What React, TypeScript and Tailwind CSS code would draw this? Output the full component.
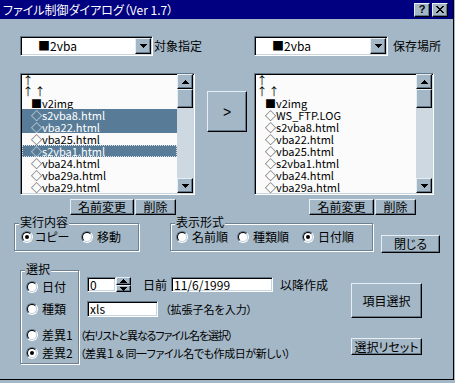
import React from "react";

const FACE = "bg-[#a4b7c6]";
const RAISED =
  "border border-t-[#e6eef3] border-l-[#e6eef3] border-r-black border-b-black shadow-[inset_-1px_-1px_0_#647889]";
const SUNKEN =
  "border border-t-[#647889] border-l-[#647889] border-r-white border-b-white shadow-[inset_1px_1px_0_#000,inset_-1px_-1px_0_#c9d5de]";
const ETCHED = "border border-[#6d8192] shadow-[inset_1px_1px_0_#fff,1px_1px_0_#fff]";

function Tri({ up = false }: { up?: boolean }) {
  return (
    <svg
      width="7"
      height="4"
      viewBox="0 0 7 4"
      shapeRendering="crispEdges"
      className={up ? "rotate-180" : ""}
    >
      <rect x="0" y="0" width="7" height="1" fill="#000" />
      <rect x="1" y="1" width="5" height="1" fill="#000" />
      <rect x="2" y="2" width="3" height="1" fill="#000" />
      <rect x="3" y="3" width="1" height="1" fill="#000" />
    </svg>
  );
}

function Btn({ children, className = "" }: { children?: React.ReactNode; className?: string }) {
  return (
    <div
      className={`${FACE} ${RAISED} flex items-center justify-center leading-none whitespace-nowrap shrink-0 ${className}`}
    >
      {children}
    </div>
  );
}

function Radio({ checked = false }: { checked?: boolean }) {
  return (
    <span className="w-[12px] h-[12px] rounded-full border border-t-[#647889] border-l-[#647889] border-r-white border-b-white flex items-center justify-center shrink-0">
      <span className="w-[10px] h-[10px] rounded-full border border-t-black border-l-black border-r-[#c9d5de] border-b-[#c9d5de] bg-white flex items-center justify-center">
        {checked && <span className="w-[4px] h-[4px] rounded-full bg-black" />}
      </span>
    </span>
  );
}

function ScrollBar() {
  return (
    <div className="w-[16px] shrink-0 flex flex-col bg-[#cdd8e0]">
      <div className={`h-[15px] ${FACE} ${RAISED} flex items-center justify-center`}>
        <Tri up />
      </div>
      <div className={`h-[19px] ${FACE} ${RAISED}`} />
      <div className="flex-1" />
      <div className={`h-[15px] ${FACE} ${RAISED} flex items-center justify-center`}>
        <Tri />
      </div>
    </div>
  );
}

type Item = { t: string; sel?: boolean; focus?: boolean; arrows?: number };

function ListBox({ items, className }: { items: Item[]; className: string }) {
  return (
    <div className={`${SUNKEN} bg-[#fbfbfb] px-[1px] pb-[1px] flex h-[122px] shrink-0 ${className}`}>
      <div className="flex-1 overflow-hidden flex flex-col text-[11px]">
        {items.map((it, i) => (
          <div
            key={i}
            className={`${i === 0 ? "h-[11px] pt-[1px]" : "h-[12px]"} shrink-0 flex items-center leading-none whitespace-nowrap ${
              it.sel ? "bg-[#587c97] text-white" : ""
            } ${it.focus ? "outline-1 outline-dotted outline-[#d8e2ea] -outline-offset-1" : ""} ${
              it.arrows ? "pl-0" : "pl-[9px]"
            }`}
          >
            {it.arrows
              ? Array.from({ length: it.arrows }).map((_, k) => (
                  <span key={k} className="w-[12px] text-center text-black leading-none">
                    ↑
                  </span>
                ))
              : it.t}
          </div>
        ))}
      </div>
      <ScrollBar />
    </div>
  );
}

function Combo({ className }: { className: string }) {
  return (
    <div className={`${SUNKEN} bg-white h-[20px] flex items-center shrink-0 ${className}`}>
      <span className="flex-1 pl-[17px] leading-none whitespace-nowrap">■2vba</span>
      <span className={`w-[16px] h-[16px] mr-[1px] ${FACE} ${RAISED} flex items-center justify-center`}>
        <Tri />
      </span>
    </div>
  );
}

const leftItems: Item[] = [
  { t: "↑", arrows: 1 },
  { t: "↑ ↑", arrows: 2 },
  { t: "■v2img" },
  { t: "◇s2vba8.html", sel: true },
  { t: "◇vba22.html", sel: true },
  { t: "◇vba25.html" },
  { t: "◇s2vba1.html", sel: true, focus: true },
  { t: "◇vba24.html" },
  { t: "◇vba29a.html" },
  { t: "◇vba29.html" },
];

const rightItems: Item[] = [
  { t: "↑", arrows: 1 },
  { t: "↑ ↑", arrows: 2 },
  { t: "■v2img" },
  { t: "◇WS_FTP.LOG" },
  { t: "◇s2vba8.html" },
  { t: "◇vba22.html" },
  { t: "◇vba25.html" },
  { t: "◇s2vba1.html" },
  { t: "◇vba24.html" },
  { t: "◇vba29a.html" },
];

export default function App() {
  return (
    <div className={`w-[455px] h-[383px] ${FACE}`}>
      <div
        className={`w-[454px] h-[380px] ${FACE} border-r border-b border-r-black border-b-black flex flex-col text-[12px] text-black font-['Noto_Sans_CJK_JP',sans-serif] [font-feature-settings:'palt'] overflow-hidden`}
      >
        {/* Title bar */}
        <div className="h-[19px] shrink-0 bg-[#000080] flex items-center pl-[3px] pr-[5px]">
          <span className="text-white text-[12px] leading-none whitespace-nowrap flex-1">
            ファイル制御ダイアログ（Ver 1.7）
          </span>
          <Btn className="w-[16px] h-[14px] font-['Liberation_Sans',sans-serif] font-bold text-[11px]">?</Btn>
          <Btn className="w-[16px] h-[14px] ml-[2px]">
            <svg width="8" height="7" viewBox="0 0 8 7" shapeRendering="crispEdges">
              <path d="M0 0h2v1h-2zM6 0h2v1h-2zM1 1h2v1h-2zM5 1h2v1h-2zM2 2h4v1h-4zM3 3h2v1h-2zM2 4h4v1h-4zM1 5h2v1h-2zM5 5h2v1h-2zM0 6h2v1h-2zM6 6h2v1h-2z" fill="#000" />
            </svg>
          </Btn>
        </div>

        {/* Row 1: combos */}
        <div className="mt-[17px] h-[20px] flex shrink-0">
          <div className="w-[254px] pl-[20px] flex items-center">
            <Combo className="w-[133px]" />
            <span className="ml-[1px] leading-none whitespace-nowrap">対象指定</span>
          </div>
          <div className="flex items-center">
            <Combo className="w-[134px]" />
            <span className="ml-[5px] leading-none whitespace-nowrap">保存場所</span>
          </div>
        </div>

        {/* Row 2: lists */}
        <div className="mt-[17px] h-[122px] flex items-start shrink-0">
          <ListBox items={leftItems} className="ml-[20px] w-[175px]" />
          <Btn className="ml-[12px] mt-[18px] w-[40px] h-[41px] text-[14px] font-['Liberation_Sans',sans-serif]">&gt;</Btn>
          <ListBox items={rightItems} className="ml-[7px] w-[180px]" />
        </div>

        {/* Row 3: rename / delete */}
        <div className="mt-[4px] h-[16px] flex shrink-0">
          <Btn className="ml-[70px] w-[64px] h-[16px]">名前変更</Btn>
          <Btn className="ml-[1px] w-[41px] h-[16px]">削除</Btn>
          <Btn className="ml-[133px] w-[65px] h-[16px]">名前変更</Btn>
          <Btn className="ml-[1px] w-[41px] h-[16px]">削除</Btn>
        </div>

        {/* Row 4: groups */}
        <div className="mt-[1px] h-[37px] flex items-start shrink-0">
          <div className={`relative ml-[14px] mt-[7px] w-[125px] h-[28px] ${ETCHED} flex items-center pl-[6px]`}>
            <span className={`absolute left-[4px] top-[-8px] px-[1px] ${FACE} leading-none whitespace-nowrap`}>
              実行内容
            </span>
            <div className="w-[60px] flex items-center">
              <Radio checked />
              <span className="ml-[2px] leading-none">コピー</span>
            </div>
            <div className="flex items-center">
              <Radio />
              <span className="ml-[4px] leading-none">移動</span>
            </div>
          </div>
          <div className={`relative ml-[31px] mt-[7px] w-[203px] h-[28px] ${ETCHED} flex items-center pl-[5px]`}>
            <span className={`absolute left-[4px] top-[-8px] px-[1px] ${FACE} leading-none whitespace-nowrap`}>
              表示形式
            </span>
            <div className="w-[61px] flex items-center">
              <Radio />
              <span className="ml-[4px] leading-none whitespace-nowrap">名前順</span>
            </div>
            <div className="w-[65px] flex items-center">
              <Radio />
              <span className="ml-[4px] leading-none whitespace-nowrap">種類順</span>
            </div>
            <div className="flex items-center">
              <Radio checked />
              <span className="ml-[4px] leading-none whitespace-nowrap">日付順</span>
            </div>
          </div>
          <Btn className="ml-[8px] mt-[19px] w-[59px] h-[18px]">閉じる</Btn>
        </div>

        {/* Row 5: selection */}
        <div className="flex items-start shrink-0">
          <div className={`relative ml-[20px] mt-[17px] w-[59px] h-[94px] ${ETCHED} flex flex-col pl-[5px] shrink-0`}>
            <span className={`absolute left-[4px] top-[-8px] px-[1px] ${FACE} leading-none whitespace-nowrap`}>
              選択
            </span>
            <div className="mt-[10px] h-[12px] flex items-center">
              <Radio />
              <span className="ml-[4px] leading-none whitespace-nowrap">日付</span>
            </div>
            <div className="mt-[10px] h-[12px] flex items-center">
              <Radio />
              <span className="ml-[4px] leading-none whitespace-nowrap">種類</span>
            </div>
            <div className="mt-[14px] h-[12px] flex items-center">
              <Radio />
              <span className="ml-[4px] leading-none whitespace-nowrap">差異1</span>
            </div>
            <div className="mt-[6px] h-[12px] flex items-center">
              <Radio checked />
              <span className="ml-[4px] leading-none whitespace-nowrap">差異2</span>
            </div>
          </div>

          <div className="ml-[1px] w-[270px] flex flex-col shrink-0">
            <div className="mt-[24px] ml-[7px] h-[15px] flex items-center">
              <div className={`${SUNKEN} bg-white w-[29px] h-[15px] flex items-center pl-[2px] leading-none`}>0</div>
              <div className="w-[15px] h-[15px] flex flex-col">
                <div className={`h-[8px] ${FACE} ${RAISED} flex items-center justify-center`}>
                  <Tri up />
                </div>
                <div className={`h-[7px] ${FACE} ${RAISED} flex items-center justify-center`}>
                  <Tri />
                </div>
              </div>
              <span className="ml-[12px] leading-none whitespace-nowrap">日前</span>
              <div className={`${SUNKEN} bg-white ml-[4px] w-[102px] h-[15px] flex items-center pl-[2px] leading-none`}>
                11/6/1999
              </div>
              <span className="ml-[7px] leading-none whitespace-nowrap">以降作成</span>
            </div>
            <div className="mt-[9px] ml-[7px] h-[16px] flex items-center">
              <div className={`${SUNKEN} bg-white w-[71px] h-[16px] flex items-center pl-[2px] leading-none`}>xls</div>
              <span className="ml-[7px] text-[11px] leading-none whitespace-nowrap">（拡張子名を入力）</span>
            </div>
            <div className="mt-[12px] h-[12px] flex items-center text-[11px] tracking-[-1.1px] leading-none whitespace-nowrap">
              （右リストと異なるファイル名を選択）
            </div>
            <div className="mt-[6px] h-[12px] flex items-center text-[11px] tracking-[-0.4px] leading-none whitespace-nowrap">
              （差異１ &amp; 同一ファイル名でも作成日が新しい）
            </div>
          </div>

          <div className="ml-[1px] w-[71px] flex flex-col shrink-0">
            <Btn className="mt-[30px] w-[71px] h-[35px]">項目選択</Btn>
            <Btn className="mt-[20px] w-[71px] h-[17px]">選択リセット</Btn>
          </div>
        </div>
      </div>
    </div>
  );
}
